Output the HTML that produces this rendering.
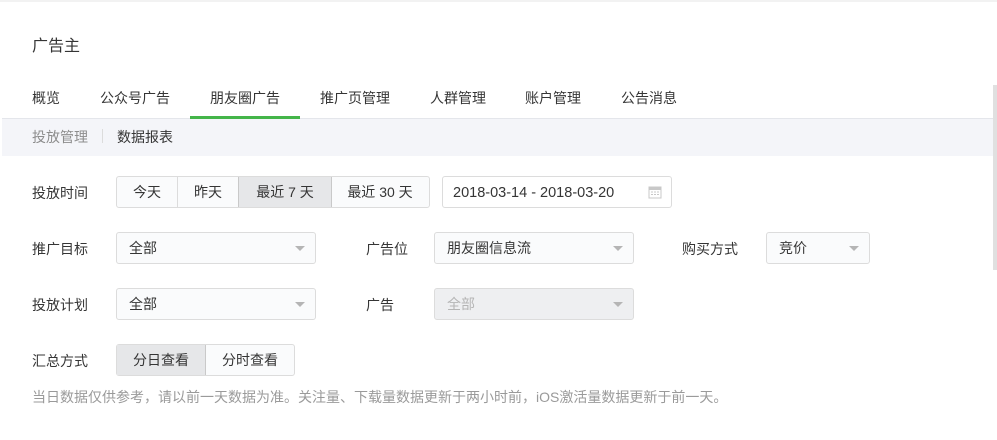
<!DOCTYPE html><html><head><meta charset="utf-8"><style>
body{margin:0;width:997px;height:440px;background:#fff;font-family:"Liberation Sans","Noto Sans CJK SC",sans-serif;font-size:14px;color:#353535;position:relative;overflow:hidden}
.a{position:absolute;white-space:nowrap}
.box{position:absolute;height:30px;border:1px solid #dcdcdc;border-radius:3px;background:#fafbfc;line-height:30px;box-sizing:content-box}
.arr{position:absolute;right:10px;top:13px;border:5px solid transparent;border-top:5px solid #b5b5b5;border-bottom:0}
.seg{position:absolute;top:0;height:30px;line-height:30px;text-align:center;border-left:1px solid #dcdcdc}
</style></head><body>
<div class="a" style="left:0;top:0;width:997px;height:2px;background:#f2f2f2"></div>
<div class="a" style="left:993px;top:85px;width:4px;height:185px;background:#e0e0e0"></div>
<div class="a" style="left:32px;top:32px;font-size:16px">广告主</div>
<div class="a" style="left:32px;top:88px">概览</div>
<div class="a" style="left:100px;top:88px">公众号广告</div>
<div class="a" style="left:210px;top:88px">朋友圈广告</div>
<div class="a" style="left:320px;top:88px">推广页管理</div>
<div class="a" style="left:430px;top:88px">人群管理</div>
<div class="a" style="left:525px;top:88px">账户管理</div>
<div class="a" style="left:621px;top:88px">公告消息</div>
<div class="a" style="left:2px;top:118px;width:991px;height:37px;background:#f4f5f9;border-top:1px solid #e4e6eb"></div>
<div class="a" style="left:190px;top:116px;width:110px;height:3px;background:#44b549"></div>
<div class="a" style="left:32px;top:127px;color:#8d8d8d">投放管理</div>
<div class="a" style="left:102px;top:129px;width:1px;height:14px;background:#dcdcdc"></div>
<div class="a" style="left:117px;top:127px">数据报表</div>

<div class="a" style="left:32px;top:183px">投放时间</div>
<div class="box" style="left:116px;top:176px;width:312px">
<div class="seg" style="left:0;width:60px;border:0">今天</div>
<div class="seg" style="left:60px;width:60px">昨天</div>
<div class="seg" style="left:121px;width:92px;background:#e6e7e9;border-right:1px solid #c9c9c9;border-left-color:#c9c9c9">最近 7 天</div>
<div class="seg" style="left:214px;width:98px;border:0">最近 30 天</div>
</div>
<div class="box" style="left:442px;top:176px;width:228px;background:#fff"><span style="margin-left:10px;font-size:14.5px">2018-03-14 - 2018-03-20</span>
<svg style="position:absolute;left:205px;top:8px" width="14" height="14" viewBox="0 0 14 14"><rect x="1" y="2" width="12" height="11" fill="none" stroke="#c8c8c8"/><rect x="1" y="2" width="12" height="3" fill="#c8c8c8"/><path d="M3 7h2M6 7h2M9 7h2M3 9.5h2M6 9.5h2M9 9.5h2" stroke="#c8c8c8"/></svg></div>

<div class="a" style="left:32px;top:239px">推广目标</div>
<div class="box" style="left:116px;top:232px;width:198px"><span style="margin-left:12px">全部</span><i class="arr"></i></div>
<div class="a" style="left:366px;top:239px">广告位</div>
<div class="box" style="left:434px;top:232px;width:198px"><span style="margin-left:12px">朋友圈信息流</span><i class="arr"></i></div>
<div class="a" style="left:682px;top:239px">购买方式</div>
<div class="box" style="left:766px;top:232px;width:102px"><span style="margin-left:12px">竞价</span><i class="arr"></i></div>

<div class="a" style="left:32px;top:295px">投放计划</div>
<div class="box" style="left:116px;top:288px;width:198px"><span style="margin-left:12px">全部</span><i class="arr"></i></div>
<div class="a" style="left:366px;top:295px">广告</div>
<div class="box" style="left:434px;top:288px;width:198px;background:#eeeff1;color:#b5b5b5"><span style="margin-left:12px">全部</span><i class="arr"></i></div>

<div class="a" style="left:32px;top:351px">汇总方式</div>
<div class="box" style="left:116px;top:344px;width:177px">
<div class="seg" style="left:0;width:88px;border:0;background:#e6e7e9;border-right:1px solid #c9c9c9">分日查看</div>
<div class="seg" style="left:89px;width:88px;border:0">分时查看</div>
</div>
<div class="a" style="left:32px;top:387px;font-size:14px;color:#9a9a9a">当日数据仅供参考，请以前一天数据为准。关注量、下载量数据更新于两小时前，iOS激活量数据更新于前一天。</div>
</body></html>
